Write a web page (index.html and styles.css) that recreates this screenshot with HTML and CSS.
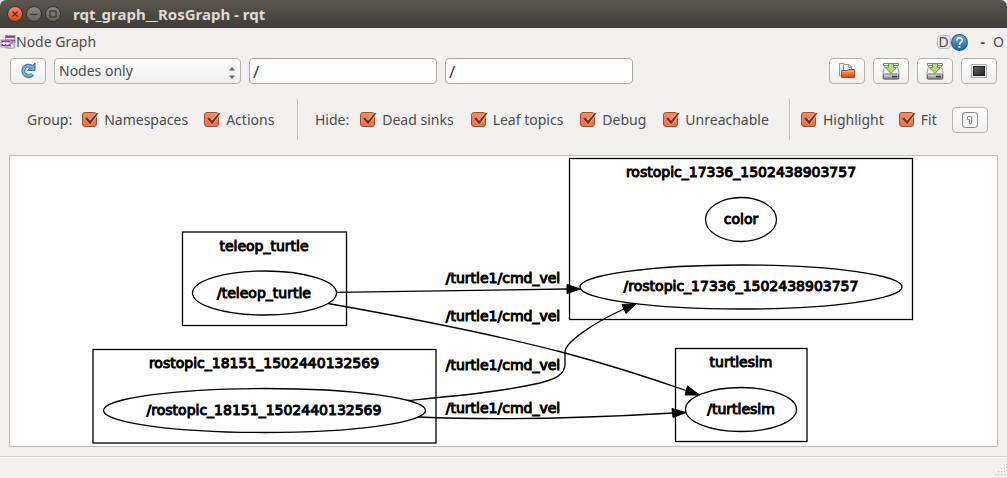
FILE: index.html
```html
<!DOCTYPE html>
<html lang="en">
<head>
<meta charset="utf-8">
<title>rqt_graph__RosGraph - rqt</title>
<link rel="stylesheet" href="styles.css">
</head>
<body>
<svg class="defs" width="0" height="0" aria-hidden="true">
  <defs>
    <linearGradient id="metal" x1="0" y1="0" x2="0" y2="1"><stop offset="0" stop-color="#eee"/><stop offset="1" stop-color="#777"/></linearGradient>
    <linearGradient id="folder" x1="0" y1="0" x2="0" y2="1"><stop offset="0" stop-color="#f8a27c"/><stop offset="1" stop-color="#dd4814"/></linearGradient>
    <linearGradient id="screen" x1="0" y1="0" x2="1" y2="1"><stop offset="0" stop-color="#666"/><stop offset="1" stop-color="#222"/></linearGradient>
    <linearGradient id="blue" x1="0" y1="0" x2="0" y2="1"><stop offset="0" stop-color="#6aa5dc"/><stop offset="1" stop-color="#22639f"/></linearGradient>
    <symbol id="tick" viewBox="0 0 18 16">
      <path d="M4.500 6 8 10.500 14.500 2.500" fill="none" stroke="#f9b08f" stroke-width="3.600"/>
      <path d="M3 6.500 5.500 5.500 8 8.800 14.500 1.300 16.500 1 8.200 12.600Z" fill="#6c3423"/>
    </symbol>
    <symbol id="disk" viewBox="0 0 18 18">
      <path d="M3 2H15L17 11V17H1V11Z" fill="#f5f5f5" stroke="#999"/>
      <rect x="1.500" y="12" width="15" height="5" rx="1" fill="url(#metal)" stroke="#666"/>
      <path d="M10 14.500H15" stroke="#333" stroke-width="1.500"/>
      <path d="M1.500 1.500H16.500V3.500H1.500Z" fill="#fff" stroke="#61a336"/>
      <path d="M6.500 1.500H11.500V5.500H14.500L9 11.500 3.500 5.500H6.500Z" fill="#b9d87b" stroke="#61a336"/>
    </symbol>
  </defs>
</svg>
<div class="window">
  <header class="titlebar">
    <button class="wm wm-close" aria-label="Close"><svg viewBox="0 0 14 14"><path d="M4.500 4.500 9.500 9.500M9.500 4.500 4.500 9.500" stroke="#632512" stroke-width="1.300"/></svg></button>
    <button class="wm" aria-label="Minimize"><svg viewBox="0 0 14 14"><path d="M3.500 7.500H10.500" stroke="#393833" stroke-width="1.300"/></svg></button>
    <button class="wm" aria-label="Maximize"><svg viewBox="0 0 14 14"><rect x="4" y="4" width="6" height="6" fill="none" stroke="#393833" stroke-width="1.300"/></svg></button>
    <h1 class="title">rqt_graph__RosGraph - rqt</h1>
  </header>

  <div class="dock">
    <svg class="dock-icon" viewBox="0 0 16 16">
      <path d="M12 7.500C15 9 15.500 12 14 14.500M5 13 7 14.500" fill="none" stroke="#bbb" stroke-width="1.500"/>
      <rect x="7" y="9.500" width="7" height="5" rx="2" fill="#e4e4e4" stroke="#aaa"/>
      <rect x="5.500" y="1.500" width="9.500" height="7" fill="#f2e6f3" stroke="#a58aab"/>
      <path d="M6 3H15M6 6.500H15" stroke="#8b4c95" stroke-width="2"/>
      <rect x="1" y="6" width="9.500" height="7" fill="#f8eef9" stroke="#a58aab"/>
      <path d="M1.500 7.500H10M1.500 11H10" stroke="#8b3298" stroke-width="2"/><path d="M4 8V11M7.500 8V11" stroke="#fff" stroke-width="2"/>
    </svg>
    <h2 class="dock-title">Node Graph</h2>
    <button class="dock-btn dock-d" aria-label="Documentation">D</button>
    <button class="dock-btn" aria-label="Help"><svg class="help" viewBox="0 0 16 16"><circle cx="8" cy="8" r="7.500" fill="url(#blue)" stroke="#245b91"/><path d="M5.500 6C5.500 2.800 10.500 2.800 10.500 5.800 10.500 7.800 8 7.700 8 10M8 11.300V13" fill="none" stroke="#fff" stroke-width="1.700"/></svg></button>
    <button class="dock-btn dock-min" aria-label="Minimize panel">-</button>
    <button class="dock-btn dock-float" aria-label="Float panel">O</button>
  </div>

  <div class="tools">
    <button class="btn" aria-label="Refresh"><svg viewBox="0 0 18 18"><path d="M13.500 12.200A5.200 5.200 0 1 1 12.500 4.600" fill="none" stroke="#3475b5" stroke-width="4"/><path d="M16 1V8.500H8.500Z" fill="#619fd8" stroke="#3475b5"/><path d="M13.200 12A5 5 0 1 1 12.500 5L14.500 7" fill="none" stroke="#79b1e3" stroke-width="2"/></svg></button>
    <div class="combo">
      <select class="select" aria-label="Graph type"><option>Nodes only</option></select>
      <svg class="arrows" viewBox="0 0 6 12"><path d="M0 3.500 3 0 6 3.500ZM0 8.500 3 12 6 8.500Z" fill="#666"/></svg>
    </div>
    <input class="field" type="text" value="/" aria-label="Node filter">
    <input class="field" type="text" value="/" aria-label="Topic filter">
    <div class="actions">
      <button class="btn" aria-label="Load"><svg viewBox="0 0 18 18"><path d="M1.500 1.500H6L8 3.500V14H1.500Z" fill="#f2f2f2" stroke="#999"/><path d="M5.500 2.500H11L13.500 5V12H5.500Z" fill="#fff" stroke="#999"/><path d="M10.500 2.500V5.500H13.500" fill="none" stroke="#999"/><path d="M3.500 8.500H9L10.500 7.500H16.500V15.500H3.500Z" fill="url(#folder)" stroke="#c34113"/><path d="M4.500 9.500H16" stroke="#ffb694"/></svg></button>
      <button class="btn" aria-label="Save as DOT"><svg viewBox="0 0 18 18"><use href="#disk"/></svg></button>
      <button class="btn" aria-label="Save as SVG"><svg viewBox="0 0 18 18"><use href="#disk"/></svg></button>
      <button class="btn" aria-label="Save as image"><svg viewBox="0 0 18 18"><rect x="1.500" y="2.500" width="15" height="13" fill="#eee" stroke="#aaa"/><rect x="3.500" y="4.500" width="11" height="9" fill="url(#screen)" stroke="#222"/></svg></button>
    </div>
  </div>

  <div class="options">
    <fieldset class="group group-nodes">
      <span class="caption">Group:</span>
      <label class="check"><span class="box"><input type="checkbox" checked><svg><use href="#tick"/></svg></span>Namespaces</label>
      <label class="check"><span class="box"><input type="checkbox" checked><svg><use href="#tick"/></svg></span>Actions</label>
    </fieldset>
    <fieldset class="group group-hide">
      <span class="caption">Hide:</span>
      <label class="check"><span class="box"><input type="checkbox" checked><svg><use href="#tick"/></svg></span>Dead sinks</label>
      <label class="check"><span class="box"><input type="checkbox" checked><svg><use href="#tick"/></svg></span>Leaf topics</label>
      <label class="check"><span class="box"><input type="checkbox" checked><svg><use href="#tick"/></svg></span>Debug</label>
      <label class="check"><span class="box"><input type="checkbox" checked><svg><use href="#tick"/></svg></span>Unreachable</label>
    </fieldset>
    <fieldset class="group group-view">
      <label class="check"><span class="box"><input type="checkbox" checked><svg><use href="#tick"/></svg></span>Highlight</label>
      <label class="check"><span class="box"><input type="checkbox" checked><svg><use href="#tick"/></svg></span>Fit</label>
      <button class="btn" aria-label="Fit to view"><svg viewBox="0 0 18 18"><rect x="1.500" y="1.500" width="15" height="15" rx="3" fill="#f8f8f8" stroke="#888"/><path d="M6.500 5.500H10.500V12.500H8.500V8.500H6.500Z" fill="#fff" stroke="#888"/></svg></button>
    </fieldset>
  </div>

  <main class="canvas">
    <svg class="graph" viewBox="10 156 987 290" role="img" aria-label="Node graph">
      <g class="shape">
        <rect x="569.500" y="158.500" width="343" height="161"/>
        <rect x="182.500" y="232" width="164" height="93.500"/>
        <rect x="93" y="349.500" width="343" height="93.500"/>
        <rect x="675.500" y="348.500" width="131.500" height="93"/>
        <ellipse cx="741" cy="219.500" rx="35.500" ry="22"/>
        <ellipse cx="741" cy="287" rx="161" ry="22"/>
        <ellipse cx="264.500" cy="293" rx="72" ry="22"/>
        <ellipse cx="264.500" cy="410.500" rx="161" ry="22"/>
        <ellipse cx="741" cy="409.500" rx="55.500" ry="22"/>
        <path d="M336 292.300 567 289"/>
        <path d="M328 303.500C410 318 500 336 565 353 610 365 650 378 686 390.500"/>
        <path d="M408 400.500C455 396 500 392 540 383 555 379 565 375 565 364V352C565 342 595 322 624 309"/>
        <path d="M418 417C500 420.500 590 418 673 413"/>
      </g>
      <g class="arrow">
        <path d="M567 284.500 580.500 289 567 293.500Z"/>
        <path d="M622 304.500 636.500 303.500 626 313.500Z"/>
        <path d="M687.500 386 699.500 395 685 395Z"/>
        <path d="M672 408.500 686 412.500 673 417.500Z"/>
      </g>
      <g class="node">
        <text x="741" y="177">rostopic_17336_1502438903757</text>
        <text x="741" y="224">color</text>
        <text x="741" y="291">/rostopic_17336_1502438903757</text>
        <text x="264" y="251">teleop_turtle</text>
        <text x="264" y="298">/teleop_turtle</text>
        <text x="264" y="368">rostopic_18151_1502440132569</text>
        <text x="264" y="415">/rostopic_18151_1502440132569</text>
        <text x="741" y="367">turtlesim</text>
        <text x="741" y="414">/turtlesim</text>
        <text x="503" y="283">/turtle1/cmd_vel</text>
        <text x="503" y="321">/turtle1/cmd_vel</text>
        <text x="503" y="370">/turtle1/cmd_vel</text>
        <text x="503" y="413">/turtle1/cmd_vel</text>
      </g>
    </svg>
  </main>
  <footer class="status">
    <svg class="grip" viewBox="0 0 11 11"><path d="M9 0h1v1h-1zM6 3h1v1h-1zM9 3h1v1h-1zM3 6h1v1h-1zM6 6h1v1h-1zM9 6h1v1h-1zM0 9h1v1h-1zM3 9h1v1h-1zM6 9h1v1h-1zM9 9h1v1h-1z" fill="#bbb9b5"/></svg>
  </footer>
</div>
</body>
</html>
```
FILE: styles.css
```css
* { box-sizing: border-box; }
body {
  margin: 0;
  background: #f2f1f0;
  color: #4c4c4c;
  font: 14px/20px "Noto Sans", "Open Sans", sans-serif;
}
button, input, select { font: inherit; color: inherit; margin: 0; padding: 0; }
button svg { display: block; }
.defs { position: absolute; }
.window { min-height: 100vh; display: flex; flex-direction: column; }

.titlebar {
  height: 28px;
  padding: 0 7px;
  display: flex;
  align-items: center;
  gap: 3px;
  border-radius: 6px 6px 0 0;
  background: linear-gradient(#5a584e, #3e3d38);
}
.wm {
  width: 16px;
  height: 16px;
  border: 1px solid #33322e;
  border-radius: 50%;
  background: linear-gradient(#8a8880, #66645c);
}
.wm svg { width: 14px; height: 14px; }
.wm-close { background: linear-gradient(#f58563, #dd4814); }
.title { margin: 0 0 0 9px; font-size: 15px; line-height: 20px; font-weight: 700; color: #dfdbd2; }

.dock { height: 28px; display: flex; align-items: center; }
.dock-icon { width: 16px; height: 16px; }
.dock-title { flex: 1; margin: 0; font-size: 14px; line-height: 20px; font-weight: 400; }
.dock-btn { border: 0; background: none; }
.dock-d { width: 14px; height: 14px; border: 1px solid #bbb; border-radius: 4px; line-height: 12px; background: #e9e7e4; }
.help { width: 17px; height: 17px; }
.dock-min { margin-left: 13px; font-weight: 700; }
.dock-float { margin: 0 3px 0 8px; }

.tools { display: flex; align-items: center; gap: 8px; padding: 2px 10px 0; }
.btn {
  flex: none;
  width: 36px;
  height: 26px;
  display: grid;
  place-items: center;
  border: 1px solid #b3b1ad;
  border-radius: 4px;
  background: linear-gradient(#fff, #efeeed);
}
.btn svg { width: 18px; height: 18px; }
.combo { flex: 0 1 187px; display: grid; align-items: center; }
.combo > * { grid-area: 1 / 1; }
.select {
  appearance: none;
  width: 100%;
  height: 26px;
  padding: 0 4px;
  border: 1px solid #b3b1ad;
  border-radius: 4px;
  background: linear-gradient(#fff, #efeeed);
}
.arrows { justify-self: end; width: 6px; height: 12px; margin: 3px 6px 0 0; pointer-events: none; }
.field {
  flex: 0 1 188px;
  min-width: 0;
  height: 26px;
  padding: 0 3px;
  border: 1px solid #aaa8a4;
  border-radius: 4px;
  background: #fff;
  color: #3c3c3c;
  font-size: 17px;
}
.actions { margin-left: auto; display: flex; gap: 8px; }

.options { display: flex; padding: 15px 19px 0 27px; }
.group {
  min-width: 0;
  height: 41px;
  margin: 0;
  padding: 1px 0 0;
  border: 0;
  display: flex;
  align-items: center;
  gap: 17px;
}
.group + .group { border-left: 1px solid #c6c4c1; box-shadow: inset 1px 0 #fff; }
.group-nodes { flex: 0 1 270px; gap: 16px; }
.group-hide { flex: 0 1 492px; padding-left: 17px; }
.group-view { flex: 1; padding-left: 11px; gap: 15px; }
.group-view .btn { margin-left: auto; }
.caption { margin-right: -6px; }
.check { display: flex; align-items: center; gap: 6px; white-space: nowrap; }
.box { display: grid; width: 16px; height: 16px; }
.box > * { grid-area: 1 / 1; }
.box input {
  appearance: none;
  width: 15px;
  height: 15px;
  border: 1px solid #a34b2b;
  border-radius: 3px;
  background: linear-gradient(#f58a63, #ee6f42);
}
.box svg { width: 18px; height: 16px; pointer-events: none; }
.box input:not(:checked) + svg { display: none; }

.canvas { flex: 1; margin: 15px 9px 9px; border: 1px solid #c0bebb; background: #fff; }
.graph { display: block; width: 100%; height: auto; }
.shape { fill: none; stroke: #000; stroke-width: 1.300; }
.arrow { fill: #000; stroke: #000; }
.node {
  font-family: "DejaVu Sans", sans-serif;
  font-size: 14px;
  text-anchor: middle;
  fill: #000;
  stroke: #000;
  stroke-width: 1;
}

.status {
  height: 22px;
  padding: 0 1px 2px;
  display: flex;
  justify-content: flex-end;
  align-items: flex-end;
  border-top: 1px solid #d5d3d1;
  box-shadow: inset 0 1px #fff;
}
.grip { width: 11px; height: 11px; }
```
